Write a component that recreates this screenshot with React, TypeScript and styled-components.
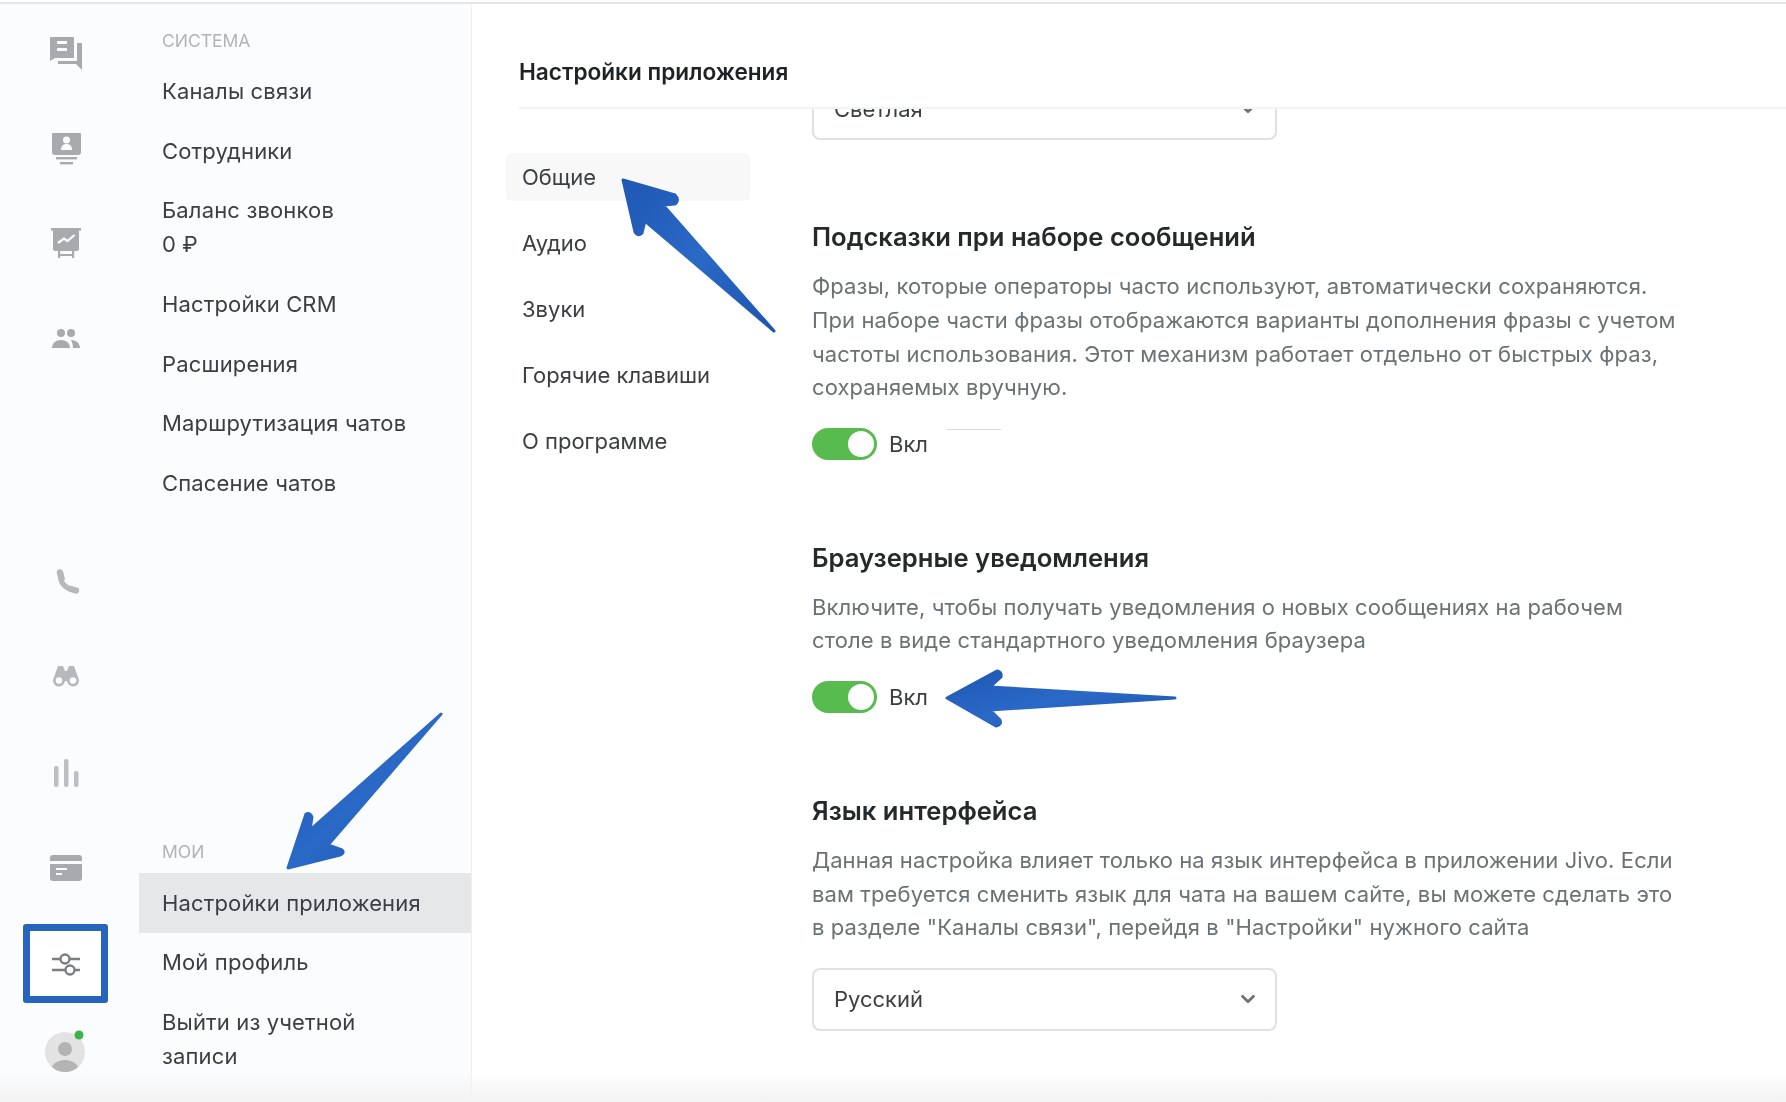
import { ReactNode } from 'react';
import styled, { createGlobalStyle } from 'styled-components';
import { ChevronDown } from 'lucide-react';

const GlobalStyle = createGlobalStyle`
  html, body {
    margin: 0;
    padding: 0;
    background: #fff;
    overflow: hidden;
  }
  * {
    box-sizing: border-box;
  }
`;

const ICON_GREY = '#a8aaad';

const Page = styled.div`
  position: relative;
  display: flex;
  flex-direction: column;
  width: 1786px;
  height: 1102px;
  overflow: hidden;
  padding-top: 2px;
  background: #fff;
  color: #3b3e42;
  font-family: Inter, 'Noto Sans', sans-serif;
  font-size: 22px;
  filter: blur(0.35px);
`;

const TopLine = styled.div`
  flex: 0 0 2px;
  background: #e7e7e7;
`;

const Columns = styled.div`
  flex: 1;
  min-height: 0;
  display: flex;
`;

const Rail = styled.nav`
  flex: 0 0 139px;
  display: flex;
  flex-direction: column;
  justify-content: space-between;
  padding: 1px 7px 0 0;
  background: #fbfcfe;
`;

const RailGroup = styled.div`
  display: flex;
  flex-direction: column;
`;

const RailSlot = styled.div<{ $active?: boolean }>`
  display: flex;
  align-items: center;
  justify-content: center;
  height: ${(p) => (p.$active ? '79px' : '95px')};
  margin: ${(p) => (p.$active ? '9px 24px 7px 23px' : '0')};
  border: ${(p) => (p.$active ? '7px solid #2764bd' : 'none')};
  border-radius: ${(p) => (p.$active ? '3px' : '0')};
  background: ${(p) => (p.$active ? '#fff' : 'transparent')};
`;

const AvatarSlot = styled.div`
  display: flex;
  justify-content: center;
  height: 92px;
  padding-top: 20px;
`;

const SideMenu = styled.aside`
  flex: 0 0 333px;
  display: flex;
  flex-direction: column;
  justify-content: space-between;
  padding: 27px 0 16px;
  background: #fbfcfe;
  border-right: 1px solid #eff0f2;
`;

const MenuLabel = styled.div`
  height: 20px;
  margin-bottom: 11px;
  padding-left: 23px;
  color: #b1b4b7;
  font-size: 17.5px;
  line-height: 20px;
  text-transform: uppercase;
`;

const MenuItem = styled.div<{ $active?: boolean }>`
  padding: 12.3px 23px 13.3px;
  line-height: 34px;
  letter-spacing: 0.15px;
  background: ${(p) => (p.$active ? '#e6e7e9' : 'transparent')};
`;

const Main = styled.main`
  flex: 1;
  min-width: 0;
  display: flex;
  flex-direction: column;
`;

const Header = styled.header`
  flex: 0 0 105px;
  margin-left: 47px;
  padding-top: 53px;
  border-bottom: 2px solid #f2f3f4;
`;

const Title = styled.h1`
  margin: 0;
  color: #1e2125;
  font-size: 22.6px;
  font-weight: 600;
  line-height: 30px;
`;

const Body = styled.div`
  flex: 1;
  min-height: 0;
  display: flex;
  overflow: hidden;
`;

const SubNav = styled.div`
  flex: 0 0 244px;
  margin-left: 34px;
  padding-top: 44px;
`;

const SubNavItem = styled.div<{ $active?: boolean }>`
  height: 48px;
  margin-bottom: 18px;
  padding-left: 16px;
  border-radius: 6px;
  line-height: 48px;
  background: ${(p) => (p.$active ? '#f8f8f9' : 'transparent')};
`;

const Content = styled.div`
  margin-left: 62px;
  margin-top: -32px;
`;

const Section = styled.section`
  margin-top: 82px;
  & + & {
    margin-top: 83.5px;
  }
`;

const Heading = styled.h2`
  margin: 0;
  color: #26292c;
  font-size: 25.6px;
  font-weight: 600;
  line-height: 30px;
`;

const Description = styled.p`
  margin: 18px 0 0;
  color: #6c7175;
  font-size: 22px;
  letter-spacing: 0.1px;
  line-height: 33.8px;
  white-space: nowrap;
`;

const ToggleRow = styled.div`
  display: flex;
  align-items: center;
  height: 31px;
  margin-top: 23px;
`;

const Track = styled.div<{ $on: boolean }>`
  display: flex;
  justify-content: ${(p) => (p.$on ? 'flex-end' : 'flex-start')};
  width: 65px;
  height: 32px;
  padding: 3px;
  border-radius: 16px;
  background: ${(p) => (p.$on ? '#58bb4f' : '#ccc')};
`;

const Knob = styled.div`
  width: 26px;
  height: 26px;
  border-radius: 50%;
  background: #fff;
`;

const ToggleText = styled.span`
  margin-left: 12px;
`;

const StrayLine = styled.div`
  align-self: flex-start;
  width: 54px;
  height: 1px;
  margin: 1px 0 0 19px;
  background: #dcdcdc;
`;

const SelectBox = styled.div`
  display: flex;
  align-items: center;
  justify-content: space-between;
  width: 465px;
  height: 63px;
  padding: 0 16px 0 20px;
  border: 2px solid #dfe1e3;
  border-radius: 8px;
  background: #fff;
  svg {
    color: #6e7276;
  }
`;

const LanguageSelect = styled(SelectBox)`
  margin-top: 22.5px;
`;

const BottomFade = styled.div`
  position: absolute;
  left: 0;
  right: 0;
  bottom: 0;
  height: 30px;
  background: linear-gradient(rgba(243, 243, 243, 0), #f3f3f3);
  pointer-events: none;
`;

const Annotations = styled.svg`
  position: absolute;
  left: 0;
  top: 0;
  pointer-events: none;
`;

function Icon({ children }: { children: ReactNode }) {
  return (
    <svg width={36} height={36} viewBox="0 0 36 36" fill={ICON_GREY}>
      {children}
    </svg>
  );
}

const ChatIcon = () => (
  <Icon>
    <path d="M3 2h22a1 1 0 0 1 1 1v19a1 1 0 0 1-1 1H7l-5 3V3a1 1 0 0 1 1-1z" />
    <path d="M29 8h4a1 1 0 0 1 1 1v26l-6-6H10v-3h19z" />
    <rect x="9" y="6" width="10" height="3" fill="#fbfcfe" />
    <rect x="9" y="13" width="10" height="3" fill="#fbfcfe" />
  </Icon>
);

const ContactIcon = () => (
  <Icon>
    <path d="M5 3h27a1 1 0 0 1 1 1v18a3 3 0 0 1-3 3H7a3 3 0 0 1-3-3V4a1 1 0 0 1 1-1z" />
    <circle cx="18.500" cy="10" r="3.500" fill="#fbfcfe" />
    <path d="M13 20c0-4 2-6 5.500-6s5.500 2 5.500 6z" fill="#fbfcfe" />
    <rect x="8" y="27" width="21" height="2.400" />
    <rect x="12" y="32" width="13" height="2.400" />
  </Icon>
);

const BoardIcon = () => (
  <Icon>
    <rect x="3" y="3" width="30" height="2.600" />
    <path d="M5 5h26v19a2 2 0 0 1-2 2H7a2 2 0 0 1-2-2z" />
    <path d="M10 18l6-4.500 3.500 2.500 7-6" fill="none" stroke="#fbfcfe" strokeWidth="2.200" />
    <rect x="10" y="26" width="2.200" height="7" />
    <rect x="24" y="26" width="2.200" height="7" />
    <rect x="10" y="29" width="16" height="2" />
  </Icon>
);

const PeopleIcon = () => (
  <Icon>
    <circle cx="13" cy="13" r="4" />
    <circle cx="23" cy="13" r="4" />
    <path d="M4 28c0-5 4-8 9-8s9 3 9 8z" />
    <path d="M23 20c5 0 9 3 9 8h-7c0-3-1-6-2-8z" />
  </Icon>
);

const PhoneIcon = () => (
  <Icon>
    <path
      d="M12.500 10Q12 22 26 25"
      fill="none"
      stroke="#b6b8bb"
      strokeWidth="5"
      strokeLinecap="round"
    />
    <path d="M12 7.500l1.500 6M23 24l5 1.500" fill="none" stroke="#b6b8bb" strokeWidth="6.500" strokeLinecap="round" />
  </Icon>
);

const BinocularsIcon = () => (
  <Icon>
    <path d="M10 6h5l2 5h2l2-5h5l5 14a6 6 0 0 1-12 1h-2a6 6 0 0 1-12-1z" fill="#b6b8bb" />
    <circle cx="11" cy="20.500" r="3.300" fill="#fbfcfe" />
    <circle cx="25" cy="20.500" r="3.300" fill="#fbfcfe" />
  </Icon>
);

const BarsIcon = () => (
  <Icon>
    <rect x="6" y="11" width="4.500" height="21" rx="2" fill="#bcbec1" />
    <rect x="16" y="4" width="4.500" height="28" rx="2" fill="#bcbec1" />
    <rect x="26" y="16" width="4.500" height="16" rx="2" fill="#bcbec1" />
  </Icon>
);

const CardIcon = () => (
  <Icon>
    <path d="M5 5h26a3 3 0 0 1 3 3v3H2V8a3 3 0 0 1 3-3z" />
    <path d="M2 14h32v14a3 3 0 0 1-3 3H5a3 3 0 0 1-3-3z" />
    <rect x="8" y="18" width="11" height="2" fill="#fbfcfe" />
    <rect x="8" y="23" width="6" height="2" fill="#fbfcfe" />
  </Icon>
);

const SlidersIcon = () => (
  <svg width="30" height="30" viewBox="0 0 30 30" fill="none" stroke="#7b7e83" strokeWidth="2.400">
    <path d="M1 10h8M19 10h10M1 21h13M24 21h5" />
    <circle cx="14" cy="10" r="4.500" />
    <circle cx="19" cy="21" r="4.500" />
  </svg>
);

const AvatarIcon = () => (
  <svg width="44" height="42" viewBox="0 0 44 42">
    <circle cx="21" cy="22" r="20" fill="#e3e3e4" />
    <circle cx="21" cy="19" r="7" fill="#b4b4b5" />
    <path d="M8 37c2-5 8-7 13-7s11 2 13 7c-3 3-8 5-13 5s-10-2-13-5z" fill="#b4b4b5" />
    <circle cx="35" cy="5" r="4.500" fill="#3fb34a" />
  </svg>
);

export default function App() {
  return (
    <>
      <GlobalStyle />
      <Page>
        <TopLine />
        <Columns>
          <Rail>
            <RailGroup>
              <RailSlot><ChatIcon /></RailSlot>
              <RailSlot><ContactIcon /></RailSlot>
              <RailSlot><BoardIcon /></RailSlot>
              <RailSlot><PeopleIcon /></RailSlot>
            </RailGroup>
            <RailGroup>
              <RailSlot><PhoneIcon /></RailSlot>
              <RailSlot><BinocularsIcon /></RailSlot>
              <RailSlot><BarsIcon /></RailSlot>
              <RailSlot><CardIcon /></RailSlot>
              <RailSlot $active><SlidersIcon /></RailSlot>
              <AvatarSlot><AvatarIcon /></AvatarSlot>
            </RailGroup>
          </Rail>

          <SideMenu>
            <div>
              <MenuLabel>Система</MenuLabel>
              <MenuItem>Каналы связи</MenuItem>
              <MenuItem>Сотрудники</MenuItem>
              <MenuItem>Баланс звонков<br />0 ₽</MenuItem>
              <MenuItem>Настройки CRM</MenuItem>
              <MenuItem>Расширения</MenuItem>
              <MenuItem>Маршрутизация чатов</MenuItem>
              <MenuItem>Спасение чатов</MenuItem>
            </div>
            <div>
              <MenuLabel>Мои</MenuLabel>
              <MenuItem $active>Настройки приложения</MenuItem>
              <MenuItem>Мой профиль</MenuItem>
              <MenuItem>Выйти из учетной<br />записи</MenuItem>
            </div>
          </SideMenu>

          <Main>
            <Header>
              <Title>Настройки приложения</Title>
            </Header>
            <Body>
              <SubNav>
                <SubNavItem $active>Общие</SubNavItem>
                <SubNavItem>Аудио</SubNavItem>
                <SubNavItem>Звуки</SubNavItem>
                <SubNavItem>Горячие клавиши</SubNavItem>
                <SubNavItem>О программе</SubNavItem>
              </SubNav>
              <Content>
                <SelectBox>
                  Светлая
                  <ChevronDown size={22} strokeWidth={3} />
                </SelectBox>

                <Section>
                  <Heading>Подсказки при наборе сообщений</Heading>
                  <Description>
                    Фразы, которые операторы часто используют, автоматически сохраняются.<br />
                    При наборе части фразы отображаются варианты дополнения фразы с учетом<br />
                    частоты использования. Этот механизм работает отдельно от быстрых фраз,<br />
                    сохраняемых вручную.
                  </Description>
                  <ToggleRow>
                    <Track $on><Knob /></Track>
                    <ToggleText>Вкл</ToggleText>
                    <StrayLine />
                  </ToggleRow>
                </Section>

                <Section>
                  <Heading>Браузерные уведомления</Heading>
                  <Description>
                    Включите, чтобы получать уведомления о новых сообщениях на рабочем<br />
                    столе в виде стандартного уведомления браузера
                  </Description>
                  <ToggleRow>
                    <Track $on><Knob /></Track>
                    <ToggleText>Вкл</ToggleText>
                  </ToggleRow>
                </Section>

                <Section>
                  <Heading>Язык интерфейса</Heading>
                  <Description>
                    Данная настройка влияет только на язык интерфейса в приложении Jivo. Если<br />
                    вам требуется сменить язык для чата на вашем сайте, вы можете сделать это<br />
                    в разделе "Каналы связи", перейдя в "Настройки" нужного сайта
                  </Description>
                  <LanguageSelect>
                    Русский
                    <ChevronDown size={22} strokeWidth={3} />
                  </LanguageSelect>
                </Section>
              </Content>
            </Body>
          </Main>
        </Columns>

        <BottomFade />

        <Annotations width="1786" height="1102" viewBox="0 0 1786 1102">
          <defs>
            <linearGradient id="arrowBlue" x1="0" y1="0" x2="1" y2="1">
              <stop offset="0" stopColor="#1f57b4" />
              <stop offset="0.5" stopColor="#2a69c6" />
              <stop offset="1" stopColor="#1c55b0" />
            </linearGradient>
          </defs>
          <g fill="url(#arrowBlue)" stroke="url(#arrowBlue)" strokeWidth="3" strokeLinejoin="round">
            <path d="M623 180L675 195Q680 200 675 204L663 205L774 331L645 221L642 233Q638 237 635 232Z" />
            <path d="M288 868L306 814Q310 812 312 817L310 830L441 714L328 845L342 850Q345 853 340 855Z" />
            <path d="M947 698L997 671Q1002 672 1001 677L990 687L1175 698L990 710L1000 720Q1002 725 996 726Z" />
          </g>
        </Annotations>
      </Page>
    </>
  );
}
